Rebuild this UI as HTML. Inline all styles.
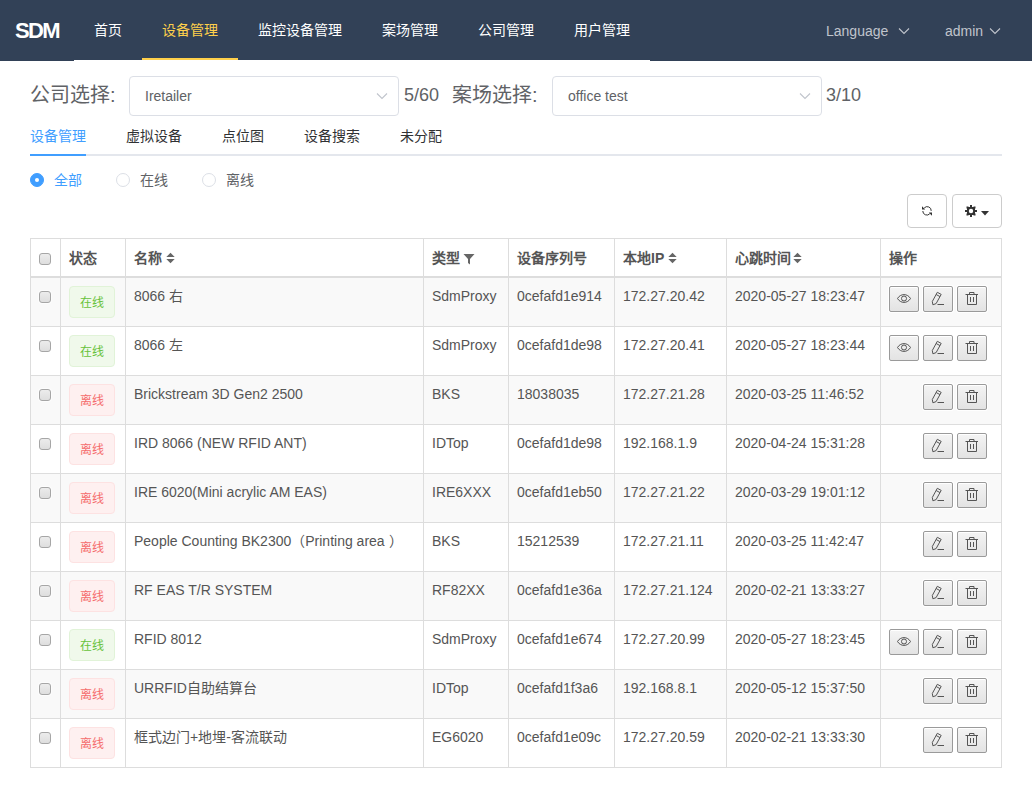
<!DOCTYPE html>
<html lang="zh-CN"><head><meta charset="utf-8"><title>SDM</title>
<style>
*{box-sizing:border-box;margin:0;padding:0}
html,body{width:1032px;height:809px;overflow:hidden;background:#fff}
body{position:relative;font-family:"Liberation Sans",sans-serif;font-size:14px;color:#606266}
.abs{position:absolute}
.t{position:absolute;white-space:nowrap;line-height:20px}
.hdr{position:absolute;left:0;top:0;width:1032px;height:61px;background:#324157}
.logo{position:absolute;left:15px;top:19px;font-size:22px;letter-spacing:-1.6px;font-weight:bold;color:#fff;line-height:24px}
.menu{position:absolute;left:74px;top:0;width:576px;height:61px;border-bottom:1px solid #fff}
.mi{position:absolute;top:0;height:60px;line-height:60px;color:#fff;font-size:14px;text-align:center}
.mi.act{color:#ffd04b;border-bottom:2px solid #ffd04b}
.rt{position:absolute;top:21px;line-height:20px;color:#c0c4cc;font-size:14px}
.sel{position:absolute;top:76px;width:270px;height:40px;border:1px solid #dcdfe6;border-radius:4px;background:#fff}
.sel span{position:absolute;left:15px;top:9px;line-height:20px;color:#606266}
.lbl{position:absolute;top:80px;font-size:20px;line-height:30px;color:#606266}
.cnt{position:absolute;top:80px;font-size:18px;line-height:30px;color:#606266}
.tab{position:absolute;top:116px;height:40px;line-height:40px;color:#303133;font-size:14px}
.tab.act{color:#409eff}
.radio{position:absolute;top:173px;width:14px;height:14px;border:1px solid #dcdfe6;border-radius:50%;background:#fff}
.radio.act{border-color:#409eff;background:#409eff}
.radio.act:after{content:"";position:absolute;left:4px;top:4px;width:4px;height:4px;border-radius:50%;background:#fff}
.rlbl{position:absolute;top:170px;line-height:20px;color:#606266}
.rlbl.act{color:#409eff}
.tbtn{position:absolute;top:194px;height:34px;border:1px solid #ccc;border-radius:4px;background:#fff}
.vl{position:absolute;width:1px;background:#ddd}
.hl{position:absolute;height:1px;background:#ddd}
.cb{position:absolute;width:12px;height:12px;border:1px solid #a6a6a6;border-radius:3px;background:linear-gradient(#ececec,#dedede);box-shadow:0 0 0 1px rgba(255,255,255,.6)}
.th{position:absolute;font-weight:bold;color:#555;line-height:20px;white-space:nowrap}
.td{position:absolute;color:#555;line-height:20px;white-space:nowrap}
.tag{position:absolute;width:46px;height:32px;border-radius:4px;border:1px solid;font-size:12px;line-height:32px;text-align:center}
.tag.on{background:#f0f9eb;border-color:#e1f3d8;color:#67c23a}
.tag.off{background:#fef0f0;border-color:#fde2e2;color:#f56c6c}
.ab{position:absolute;width:30px;height:26px;border:1px solid #9a9a9a;border-radius:2px;background:linear-gradient(#f4f4f4,#e3e3e3);box-shadow:0 0 0 1px #fff,inset 0 1px 0 #fff}
.ab svg{position:absolute;left:-1px;top:-1px}
</style></head><body>

<div class="hdr"></div>
<div class="logo">SDM</div>
<div class="menu">
<div class="mi" style="left:0px;width:68px">首页</div>
<div class="mi act" style="left:68px;width:96px">设备管理</div>
<div class="mi" style="left:164px;width:124px">监控设备管理</div>
<div class="mi" style="left:288px;width:96px">案场管理</div>
<div class="mi" style="left:384px;width:96px">公司管理</div>
<div class="mi" style="left:480px;width:96px">用户管理</div>
</div>
<div class="rt" style="left:826px">Language</div>
<svg class="abs" style="left:898px;top:27px" width="12" height="8" viewBox="0 0 12 8"><path d="M1 1.5 L6 6.5 L11 1.5" fill="none" stroke="#c0c4cc" stroke-width="1.1"/></svg>
<div class="rt" style="left:945px">admin</div>
<svg class="abs" style="left:989px;top:27px" width="12" height="8" viewBox="0 0 12 8"><path d="M1 1.5 L6 6.5 L11 1.5" fill="none" stroke="#c0c4cc" stroke-width="1.1"/></svg>
<div class="lbl" style="left:30px">公司选择:</div>
<div class="sel" style="left:129px"><span>Iretailer</span></div>
<svg class="abs" style="left:376px;top:92px" width="12" height="8" viewBox="0 0 12 8"><path d="M1 1.5 L6 6.5 L11 1.5" fill="none" stroke="#c0c4cc" stroke-width="1.1"/></svg>
<div class="cnt" style="left:404px">5/60</div>
<div class="lbl" style="left:452px">案场选择:</div>
<div class="sel" style="left:552px"><span>office test</span></div>
<svg class="abs" style="left:799px;top:92px" width="12" height="8" viewBox="0 0 12 8"><path d="M1 1.5 L6 6.5 L11 1.5" fill="none" stroke="#c0c4cc" stroke-width="1.1"/></svg>
<div class="cnt" style="left:826px">3/10</div>
<div class="abs" style="left:30px;top:154px;width:972px;height:2px;background:#e4e7ed"></div>
<div class="abs" style="left:30px;top:154px;width:56px;height:2px;background:#409eff"></div>
<div class="tab act" style="left:30px">设备管理</div>
<div class="tab" style="left:126px">虚拟设备</div>
<div class="tab" style="left:222px">点位图</div>
<div class="tab" style="left:304px">设备搜索</div>
<div class="tab" style="left:400px">未分配</div>
<div class="radio act" style="left:30px"></div>
<div class="rlbl act" style="left:54px">全部</div>
<div class="radio" style="left:116px"></div>
<div class="rlbl" style="left:140px">在线</div>
<div class="radio" style="left:202px"></div>
<div class="rlbl" style="left:226px">离线</div>
<div class="tbtn" style="left:907px;width:40px"></div>
<svg class="abs" style="left:920px;top:204px" width="14" height="14" viewBox="0 0 14 14"><g fill="none" stroke="#333" stroke-width="1"><path d="M4.2 4 A4 4 0 0 1 11.2 6.9"/><path d="M2.8 7 A4 4 0 0 0 9.8 9.7"/></g><path d="M2 2.2 L2 5.4 L5.2 5.4Z" fill="#333"/><path d="M12 11.8 L12 8.6 L8.8 8.6Z" fill="#333"/></svg>
<div class="tbtn" style="left:952px;width:50px"></div>
<svg class="abs" style="left:964px;top:204px" width="14" height="14" viewBox="0 0 14 14"><g fill="#333"><rect x="3" y="3" width="8" height="8"/><rect x="6" y="1" width="2" height="12"/><rect x="1" y="6" width="12" height="2"/><rect x="2.5" y="2.5" width="2" height="2"/><rect x="9.5" y="2.5" width="2" height="2"/><rect x="2.5" y="9.5" width="2" height="2"/><rect x="9.5" y="9.5" width="2" height="2"/></g><circle cx="7" cy="7" r="2.2" fill="#fff"/></svg>
<svg class="abs" style="left:981px;top:211px" width="8" height="5" viewBox="0 0 8 5"><path d="M0 0H8L4 4.5Z" fill="#333"/></svg>
<div class="abs" style="left:31px;top:278px;width:970px;height:48px;background:#f9f9f9"></div>
<div class="abs" style="left:31px;top:376px;width:970px;height:48px;background:#f9f9f9"></div>
<div class="abs" style="left:31px;top:474px;width:970px;height:48px;background:#f9f9f9"></div>
<div class="abs" style="left:31px;top:572px;width:970px;height:48px;background:#f9f9f9"></div>
<div class="abs" style="left:31px;top:670px;width:970px;height:48px;background:#f9f9f9"></div>
<div class="vl" style="left:30px;top:238px;height:530px"></div>
<div class="vl" style="left:60px;top:238px;height:530px"></div>
<div class="vl" style="left:125px;top:238px;height:530px"></div>
<div class="vl" style="left:423px;top:238px;height:530px"></div>
<div class="vl" style="left:508px;top:238px;height:530px"></div>
<div class="vl" style="left:614px;top:238px;height:530px"></div>
<div class="vl" style="left:726px;top:238px;height:530px"></div>
<div class="vl" style="left:880px;top:238px;height:530px"></div>
<div class="vl" style="left:1001px;top:238px;height:530px"></div>
<div class="hl" style="left:30px;top:238px;width:972px"></div>
<div class="hl" style="left:30px;top:276px;width:972px;height:2px"></div>
<div class="hl" style="left:30px;top:326px;width:972px"></div>
<div class="hl" style="left:30px;top:375px;width:972px"></div>
<div class="hl" style="left:30px;top:424px;width:972px"></div>
<div class="hl" style="left:30px;top:473px;width:972px"></div>
<div class="hl" style="left:30px;top:522px;width:972px"></div>
<div class="hl" style="left:30px;top:571px;width:972px"></div>
<div class="hl" style="left:30px;top:620px;width:972px"></div>
<div class="hl" style="left:30px;top:669px;width:972px"></div>
<div class="hl" style="left:30px;top:718px;width:972px"></div>
<div class="hl" style="left:30px;top:767px;width:972px"></div>
<div class="cb" style="left:39px;top:253px"></div>
<div class="th" style="left:69px;top:248px">状态</div>
<div class="th" style="left:134px;top:248px">名称</div>
<svg class="abs" style="left:166px;top:252px" width="9" height="12" viewBox="0 0 9 12"><path d="M0.3 5 L4.5 0.8 L8.7 5Z M0.3 7 L4.5 11.3 L8.7 7Z" fill="#666"/></svg>
<div class="th" style="left:432px;top:248px">类型</div>
<svg class="abs" style="left:463px;top:253px" width="12" height="12" viewBox="0 0 12 12"><path d="M0.5 1 H11.5 L7 6 V11.5 L5 10 V6 Z" fill="#666"/></svg>
<div class="th" style="left:517px;top:248px">设备序列号</div>
<div class="th" style="left:623px;top:248px">本地IP</div>
<svg class="abs" style="left:668px;top:252px" width="9" height="12" viewBox="0 0 9 12"><path d="M0.3 5 L4.5 0.8 L8.7 5Z M0.3 7 L4.5 11.3 L8.7 7Z" fill="#666"/></svg>
<div class="th" style="left:735px;top:248px">心跳时间</div>
<svg class="abs" style="left:793px;top:252px" width="9" height="12" viewBox="0 0 9 12"><path d="M0.3 5 L4.5 0.8 L8.7 5Z M0.3 7 L4.5 11.3 L8.7 7Z" fill="#666"/></svg>
<div class="th" style="left:889px;top:248px">操作</div>
<div class="cb" style="left:39px;top:291px"></div>
<div class="tag on" style="left:69px;top:286px">在线</div>
<div class="td" style="left:134px;top:286px">8066 右</div>
<div class="td" style="left:432px;top:286px">SdmProxy</div>
<div class="td" style="left:517px;top:286px">0cefafd1e914</div>
<div class="td" style="left:623px;top:286px">172.27.20.42</div>
<div class="td" style="left:735px;top:286px">2020-05-27 18:23:47</div>
<div class="ab" style="left:889px;top:286px"><svg width="30" height="26" viewBox="0 0 30 26"><path d="M8.5 12.5 C11.5 7.3 18.5 7.3 21.5 12.5 C18.5 17.7 11.5 17.7 8.5 12.5Z" fill="none" stroke="#555" stroke-width="1"/><circle cx="15" cy="12.5" r="2.5" fill="none" stroke="#555" stroke-width="1"/></svg></div>
<div class="ab" style="left:923px;top:286px"><svg width="30" height="26" viewBox="0 0 30 26"><path d="M14.3 6.3 L18.2 8.4 L13.1 17.6 L9.9 18.8 L9.3 15.5 Z M13.1 8.5 L17 10.6" fill="none" stroke="#555" stroke-width="1"/><path d="M14.5 18.5 H21" stroke="#555" stroke-width="1"/></svg></div>
<div class="ab" style="left:957px;top:286px"><svg width="30" height="26" viewBox="0 0 30 26"><path d="M8.5 8.5 H21 M12.5 8.5 V6.5 H17 V8.5" fill="none" stroke="#555" stroke-width="1"/><path d="M10.5 8.5 V18.5 H19.5 V8.5" fill="none" stroke="#555" stroke-width="1"/><path d="M13.5 11 V16 M16.5 11 V16" stroke="#555" stroke-width="1"/></svg></div>
<div class="cb" style="left:39px;top:340px"></div>
<div class="tag on" style="left:69px;top:335px">在线</div>
<div class="td" style="left:134px;top:335px">8066 左</div>
<div class="td" style="left:432px;top:335px">SdmProxy</div>
<div class="td" style="left:517px;top:335px">0cefafd1de98</div>
<div class="td" style="left:623px;top:335px">172.27.20.41</div>
<div class="td" style="left:735px;top:335px">2020-05-27 18:23:44</div>
<div class="ab" style="left:889px;top:335px"><svg width="30" height="26" viewBox="0 0 30 26"><path d="M8.5 12.5 C11.5 7.3 18.5 7.3 21.5 12.5 C18.5 17.7 11.5 17.7 8.5 12.5Z" fill="none" stroke="#555" stroke-width="1"/><circle cx="15" cy="12.5" r="2.5" fill="none" stroke="#555" stroke-width="1"/></svg></div>
<div class="ab" style="left:923px;top:335px"><svg width="30" height="26" viewBox="0 0 30 26"><path d="M14.3 6.3 L18.2 8.4 L13.1 17.6 L9.9 18.8 L9.3 15.5 Z M13.1 8.5 L17 10.6" fill="none" stroke="#555" stroke-width="1"/><path d="M14.5 18.5 H21" stroke="#555" stroke-width="1"/></svg></div>
<div class="ab" style="left:957px;top:335px"><svg width="30" height="26" viewBox="0 0 30 26"><path d="M8.5 8.5 H21 M12.5 8.5 V6.5 H17 V8.5" fill="none" stroke="#555" stroke-width="1"/><path d="M10.5 8.5 V18.5 H19.5 V8.5" fill="none" stroke="#555" stroke-width="1"/><path d="M13.5 11 V16 M16.5 11 V16" stroke="#555" stroke-width="1"/></svg></div>
<div class="cb" style="left:39px;top:389px"></div>
<div class="tag off" style="left:69px;top:384px">离线</div>
<div class="td" style="left:134px;top:384px">Brickstream 3D Gen2 2500</div>
<div class="td" style="left:432px;top:384px">BKS</div>
<div class="td" style="left:517px;top:384px">18038035</div>
<div class="td" style="left:623px;top:384px">172.27.21.28</div>
<div class="td" style="left:735px;top:384px">2020-03-25 11:46:52</div>
<div class="ab" style="left:923px;top:384px"><svg width="30" height="26" viewBox="0 0 30 26"><path d="M14.3 6.3 L18.2 8.4 L13.1 17.6 L9.9 18.8 L9.3 15.5 Z M13.1 8.5 L17 10.6" fill="none" stroke="#555" stroke-width="1"/><path d="M14.5 18.5 H21" stroke="#555" stroke-width="1"/></svg></div>
<div class="ab" style="left:957px;top:384px"><svg width="30" height="26" viewBox="0 0 30 26"><path d="M8.5 8.5 H21 M12.5 8.5 V6.5 H17 V8.5" fill="none" stroke="#555" stroke-width="1"/><path d="M10.5 8.5 V18.5 H19.5 V8.5" fill="none" stroke="#555" stroke-width="1"/><path d="M13.5 11 V16 M16.5 11 V16" stroke="#555" stroke-width="1"/></svg></div>
<div class="cb" style="left:39px;top:438px"></div>
<div class="tag off" style="left:69px;top:433px">离线</div>
<div class="td" style="left:134px;top:433px">IRD 8066 (NEW RFID ANT)</div>
<div class="td" style="left:432px;top:433px">IDTop</div>
<div class="td" style="left:517px;top:433px">0cefafd1de98</div>
<div class="td" style="left:623px;top:433px">192.168.1.9</div>
<div class="td" style="left:735px;top:433px">2020-04-24 15:31:28</div>
<div class="ab" style="left:923px;top:433px"><svg width="30" height="26" viewBox="0 0 30 26"><path d="M14.3 6.3 L18.2 8.4 L13.1 17.6 L9.9 18.8 L9.3 15.5 Z M13.1 8.5 L17 10.6" fill="none" stroke="#555" stroke-width="1"/><path d="M14.5 18.5 H21" stroke="#555" stroke-width="1"/></svg></div>
<div class="ab" style="left:957px;top:433px"><svg width="30" height="26" viewBox="0 0 30 26"><path d="M8.5 8.5 H21 M12.5 8.5 V6.5 H17 V8.5" fill="none" stroke="#555" stroke-width="1"/><path d="M10.5 8.5 V18.5 H19.5 V8.5" fill="none" stroke="#555" stroke-width="1"/><path d="M13.5 11 V16 M16.5 11 V16" stroke="#555" stroke-width="1"/></svg></div>
<div class="cb" style="left:39px;top:487px"></div>
<div class="tag off" style="left:69px;top:482px">离线</div>
<div class="td" style="left:134px;top:482px">IRE 6020(Mini acrylic AM EAS)</div>
<div class="td" style="left:432px;top:482px">IRE6XXX</div>
<div class="td" style="left:517px;top:482px">0cefafd1eb50</div>
<div class="td" style="left:623px;top:482px">172.27.21.22</div>
<div class="td" style="left:735px;top:482px">2020-03-29 19:01:12</div>
<div class="ab" style="left:923px;top:482px"><svg width="30" height="26" viewBox="0 0 30 26"><path d="M14.3 6.3 L18.2 8.4 L13.1 17.6 L9.9 18.8 L9.3 15.5 Z M13.1 8.5 L17 10.6" fill="none" stroke="#555" stroke-width="1"/><path d="M14.5 18.5 H21" stroke="#555" stroke-width="1"/></svg></div>
<div class="ab" style="left:957px;top:482px"><svg width="30" height="26" viewBox="0 0 30 26"><path d="M8.5 8.5 H21 M12.5 8.5 V6.5 H17 V8.5" fill="none" stroke="#555" stroke-width="1"/><path d="M10.5 8.5 V18.5 H19.5 V8.5" fill="none" stroke="#555" stroke-width="1"/><path d="M13.5 11 V16 M16.5 11 V16" stroke="#555" stroke-width="1"/></svg></div>
<div class="cb" style="left:39px;top:536px"></div>
<div class="tag off" style="left:69px;top:531px">离线</div>
<div class="td" style="left:134px;top:531px">People Counting BK2300（Printing area ）</div>
<div class="td" style="left:432px;top:531px">BKS</div>
<div class="td" style="left:517px;top:531px">15212539</div>
<div class="td" style="left:623px;top:531px">172.27.21.11</div>
<div class="td" style="left:735px;top:531px">2020-03-25 11:42:47</div>
<div class="ab" style="left:923px;top:531px"><svg width="30" height="26" viewBox="0 0 30 26"><path d="M14.3 6.3 L18.2 8.4 L13.1 17.6 L9.9 18.8 L9.3 15.5 Z M13.1 8.5 L17 10.6" fill="none" stroke="#555" stroke-width="1"/><path d="M14.5 18.5 H21" stroke="#555" stroke-width="1"/></svg></div>
<div class="ab" style="left:957px;top:531px"><svg width="30" height="26" viewBox="0 0 30 26"><path d="M8.5 8.5 H21 M12.5 8.5 V6.5 H17 V8.5" fill="none" stroke="#555" stroke-width="1"/><path d="M10.5 8.5 V18.5 H19.5 V8.5" fill="none" stroke="#555" stroke-width="1"/><path d="M13.5 11 V16 M16.5 11 V16" stroke="#555" stroke-width="1"/></svg></div>
<div class="cb" style="left:39px;top:585px"></div>
<div class="tag off" style="left:69px;top:580px">离线</div>
<div class="td" style="left:134px;top:580px">RF EAS T/R SYSTEM</div>
<div class="td" style="left:432px;top:580px">RF82XX</div>
<div class="td" style="left:517px;top:580px">0cefafd1e36a</div>
<div class="td" style="left:623px;top:580px">172.27.21.124</div>
<div class="td" style="left:735px;top:580px">2020-02-21 13:33:27</div>
<div class="ab" style="left:923px;top:580px"><svg width="30" height="26" viewBox="0 0 30 26"><path d="M14.3 6.3 L18.2 8.4 L13.1 17.6 L9.9 18.8 L9.3 15.5 Z M13.1 8.5 L17 10.6" fill="none" stroke="#555" stroke-width="1"/><path d="M14.5 18.5 H21" stroke="#555" stroke-width="1"/></svg></div>
<div class="ab" style="left:957px;top:580px"><svg width="30" height="26" viewBox="0 0 30 26"><path d="M8.5 8.5 H21 M12.5 8.5 V6.5 H17 V8.5" fill="none" stroke="#555" stroke-width="1"/><path d="M10.5 8.5 V18.5 H19.5 V8.5" fill="none" stroke="#555" stroke-width="1"/><path d="M13.5 11 V16 M16.5 11 V16" stroke="#555" stroke-width="1"/></svg></div>
<div class="cb" style="left:39px;top:634px"></div>
<div class="tag on" style="left:69px;top:629px">在线</div>
<div class="td" style="left:134px;top:629px">RFID 8012</div>
<div class="td" style="left:432px;top:629px">SdmProxy</div>
<div class="td" style="left:517px;top:629px">0cefafd1e674</div>
<div class="td" style="left:623px;top:629px">172.27.20.99</div>
<div class="td" style="left:735px;top:629px">2020-05-27 18:23:45</div>
<div class="ab" style="left:889px;top:629px"><svg width="30" height="26" viewBox="0 0 30 26"><path d="M8.5 12.5 C11.5 7.3 18.5 7.3 21.5 12.5 C18.5 17.7 11.5 17.7 8.5 12.5Z" fill="none" stroke="#555" stroke-width="1"/><circle cx="15" cy="12.5" r="2.5" fill="none" stroke="#555" stroke-width="1"/></svg></div>
<div class="ab" style="left:923px;top:629px"><svg width="30" height="26" viewBox="0 0 30 26"><path d="M14.3 6.3 L18.2 8.4 L13.1 17.6 L9.9 18.8 L9.3 15.5 Z M13.1 8.5 L17 10.6" fill="none" stroke="#555" stroke-width="1"/><path d="M14.5 18.5 H21" stroke="#555" stroke-width="1"/></svg></div>
<div class="ab" style="left:957px;top:629px"><svg width="30" height="26" viewBox="0 0 30 26"><path d="M8.5 8.5 H21 M12.5 8.5 V6.5 H17 V8.5" fill="none" stroke="#555" stroke-width="1"/><path d="M10.5 8.5 V18.5 H19.5 V8.5" fill="none" stroke="#555" stroke-width="1"/><path d="M13.5 11 V16 M16.5 11 V16" stroke="#555" stroke-width="1"/></svg></div>
<div class="cb" style="left:39px;top:683px"></div>
<div class="tag off" style="left:69px;top:678px">离线</div>
<div class="td" style="left:134px;top:678px">URRFID自助结算台</div>
<div class="td" style="left:432px;top:678px">IDTop</div>
<div class="td" style="left:517px;top:678px">0cefafd1f3a6</div>
<div class="td" style="left:623px;top:678px">192.168.8.1</div>
<div class="td" style="left:735px;top:678px">2020-05-12 15:37:50</div>
<div class="ab" style="left:923px;top:678px"><svg width="30" height="26" viewBox="0 0 30 26"><path d="M14.3 6.3 L18.2 8.4 L13.1 17.6 L9.9 18.8 L9.3 15.5 Z M13.1 8.5 L17 10.6" fill="none" stroke="#555" stroke-width="1"/><path d="M14.5 18.5 H21" stroke="#555" stroke-width="1"/></svg></div>
<div class="ab" style="left:957px;top:678px"><svg width="30" height="26" viewBox="0 0 30 26"><path d="M8.5 8.5 H21 M12.5 8.5 V6.5 H17 V8.5" fill="none" stroke="#555" stroke-width="1"/><path d="M10.5 8.5 V18.5 H19.5 V8.5" fill="none" stroke="#555" stroke-width="1"/><path d="M13.5 11 V16 M16.5 11 V16" stroke="#555" stroke-width="1"/></svg></div>
<div class="cb" style="left:39px;top:732px"></div>
<div class="tag off" style="left:69px;top:727px">离线</div>
<div class="td" style="left:134px;top:727px">框式边门+地埋-客流联动</div>
<div class="td" style="left:432px;top:727px">EG6020</div>
<div class="td" style="left:517px;top:727px">0cefafd1e09c</div>
<div class="td" style="left:623px;top:727px">172.27.20.59</div>
<div class="td" style="left:735px;top:727px">2020-02-21 13:33:30</div>
<div class="ab" style="left:923px;top:727px"><svg width="30" height="26" viewBox="0 0 30 26"><path d="M14.3 6.3 L18.2 8.4 L13.1 17.6 L9.9 18.8 L9.3 15.5 Z M13.1 8.5 L17 10.6" fill="none" stroke="#555" stroke-width="1"/><path d="M14.5 18.5 H21" stroke="#555" stroke-width="1"/></svg></div>
<div class="ab" style="left:957px;top:727px"><svg width="30" height="26" viewBox="0 0 30 26"><path d="M8.5 8.5 H21 M12.5 8.5 V6.5 H17 V8.5" fill="none" stroke="#555" stroke-width="1"/><path d="M10.5 8.5 V18.5 H19.5 V8.5" fill="none" stroke="#555" stroke-width="1"/><path d="M13.5 11 V16 M16.5 11 V16" stroke="#555" stroke-width="1"/></svg></div>
</body></html>
